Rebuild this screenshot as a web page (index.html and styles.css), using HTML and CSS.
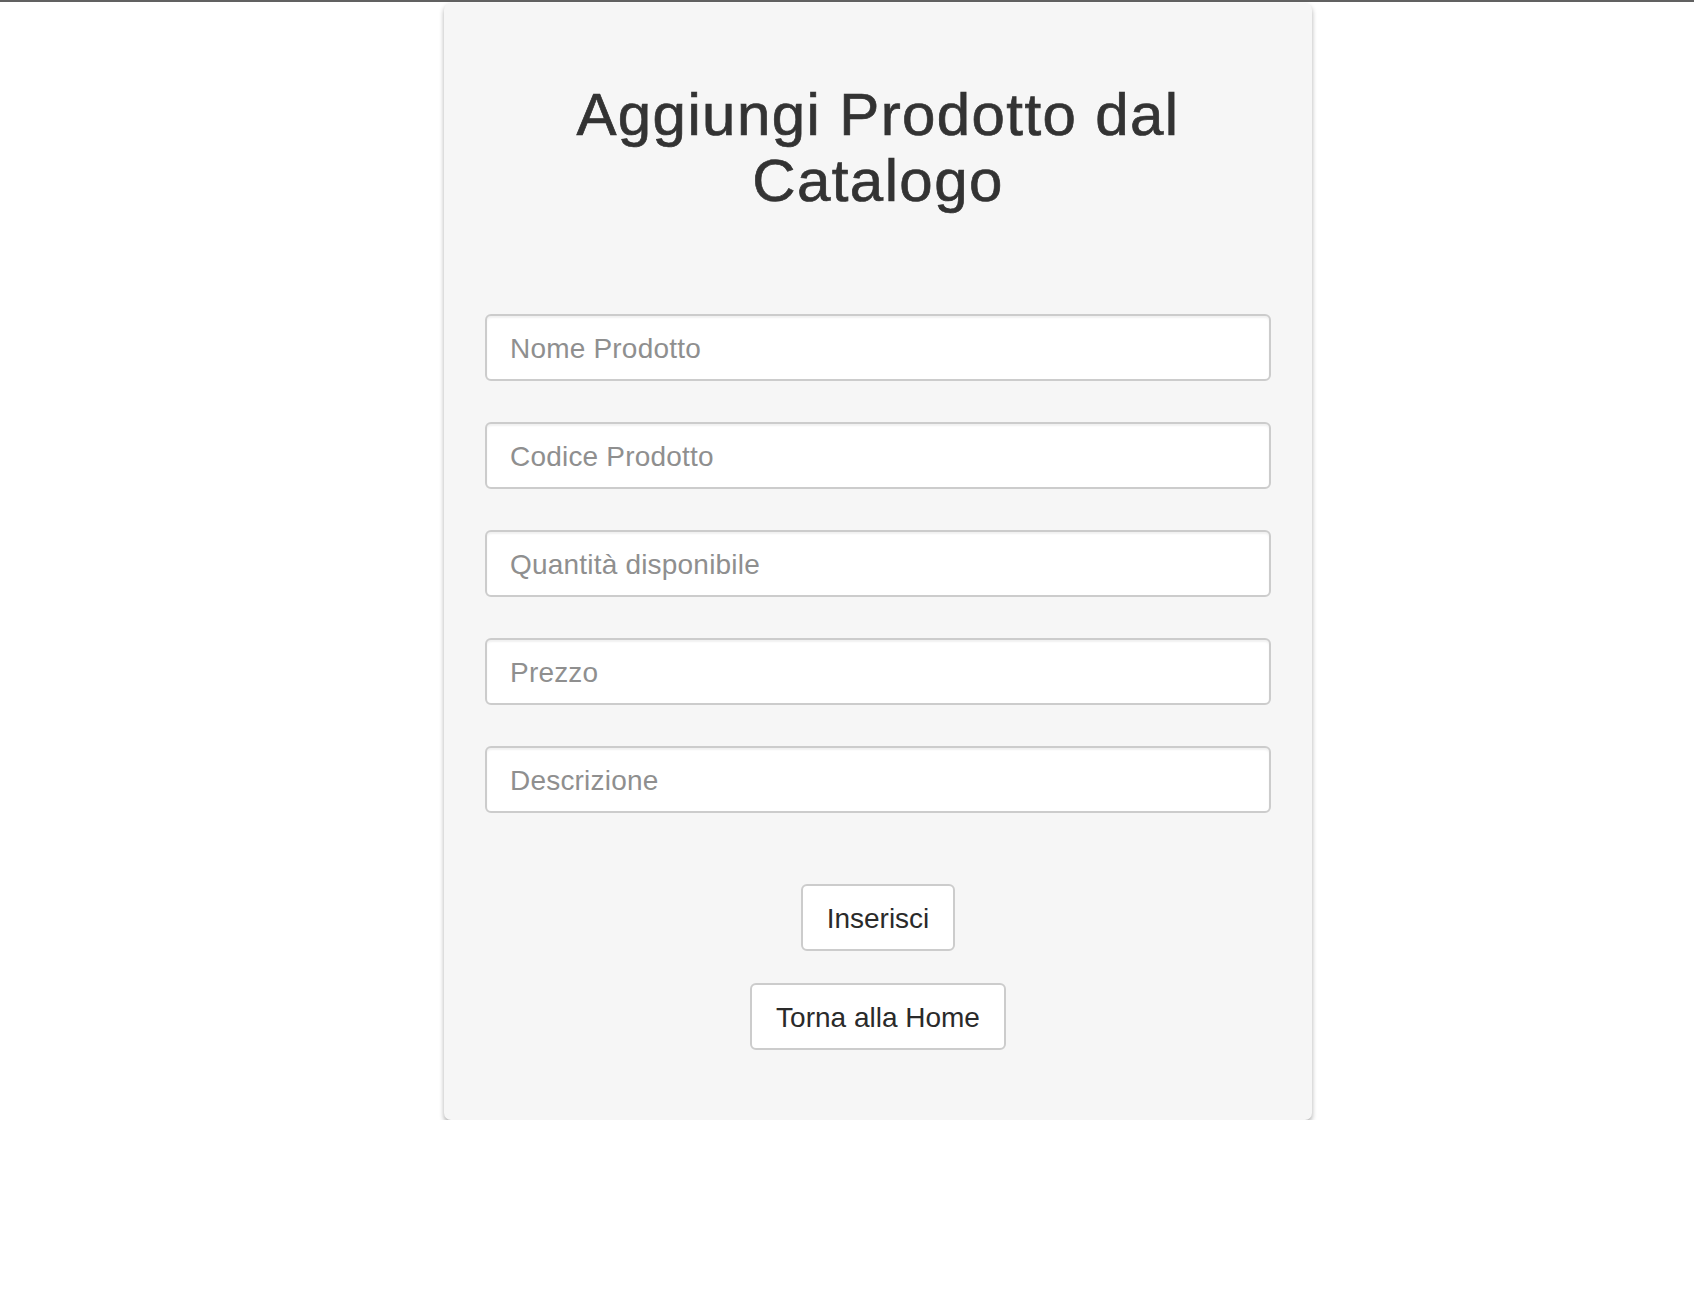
FILE: index.html
```html
<!DOCTYPE html>
<html lang="it">
<head>
<meta charset="utf-8">
<title>Aggiungi Prodotto dal Catalogo</title>
<link rel="stylesheet" href="styles.css">
</head>
<body>
<div class="topbar"></div>
<div class="page">
  <div class="card">
    <h1 class="title">Aggiungi Prodotto dal Catalogo</h1>
    <form class="form">
      <input class="field" type="text" placeholder="Nome Prodotto">
      <input class="field" type="text" placeholder="Codice Prodotto">
      <input class="field" type="text" placeholder="Quantità disponibile">
      <input class="field" type="text" placeholder="Prezzo">
      <input class="field" type="text" placeholder="Descrizione">
      <div class="actions">
        <button class="btn" type="button">Inserisci</button>
        <button class="btn" type="button">Torna alla Home</button>
      </div>
    </form>
  </div>
</div>
</body>
</html>
```

FILE: styles.css
```css
html, body {
  margin: 0;
  padding: 0;
  background: #ffffff;
  font-family: "Liberation Sans", Arial, Helvetica, sans-serif;
}

.topbar {
  height: 2px;
  background: #616161;
}

.page {
  display: flex;
  justify-content: center;
  padding-left: 62px;
  padding-top: 1px;
}

.card {
  width: 868px;
  box-sizing: border-box;
  background: #f6f6f6;
  border-radius: 7px;
  box-shadow: 0 3px 5px rgba(0, 0, 0, 0.32);
  padding: 40px 41px 70px;
}

.title {
  margin: 39px 0 0;
  font-size: 60px;
  line-height: 66px;
  font-weight: normal;
  letter-spacing: 1.4px;
  -webkit-text-stroke: 0.7px #333333;
  color: #333333;
  text-align: center;
}

.form {
  display: flex;
  flex-direction: column;
  margin-top: 100px;
}

.field {
  height: 67px;
  box-sizing: border-box;
  margin: 0 0 41px;
  padding: 3px 23px 0;
  border: 2px solid #cccccc;
  border-radius: 6px;
  background: #ffffff;
  box-shadow: inset 0 2px 2px rgba(0, 0, 0, 0.06);
  font-family: "Liberation Sans", Arial, Helvetica, sans-serif;
  font-size: 28px;
  letter-spacing: 0.2px;
  color: #333333;
  outline: none;
}

.field::placeholder {
  color: #8f8f8f;
}

.actions {
  display: flex;
  flex-direction: column;
  align-items: center;
  gap: 32px;
  margin-top: 30px;
}

.btn {
  height: 67px;
  box-sizing: border-box;
  padding: 2px 24px 0;
  border: 2px solid #cccccc;
  border-radius: 6px;
  background: #ffffff;
  font-family: "Liberation Sans", Arial, Helvetica, sans-serif;
  font-size: 28px;
  color: #2a2a2a;
}
```
